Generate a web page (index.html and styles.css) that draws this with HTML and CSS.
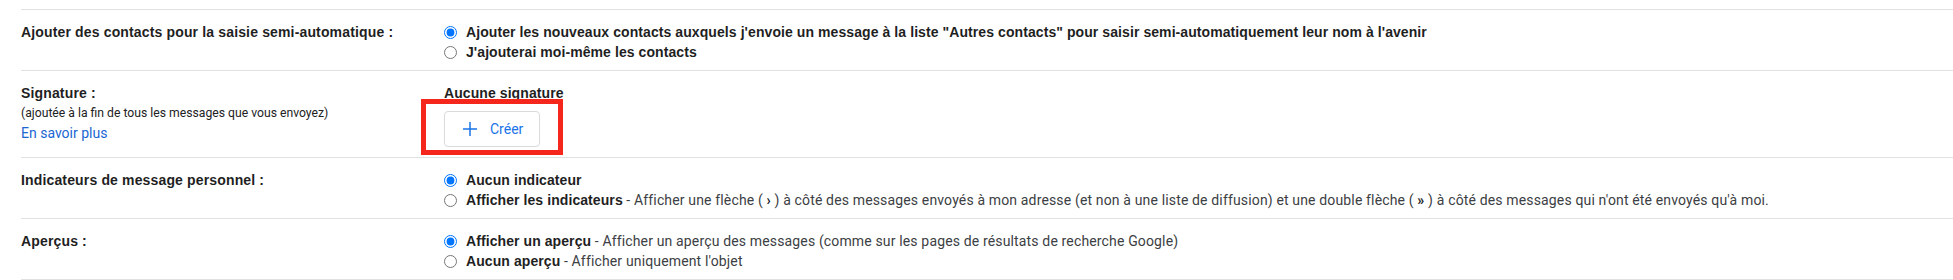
FILE: index.html
```html
<!DOCTYPE html>
<html lang="fr">
<head>
<meta charset="utf-8">
<title>Paramètres</title>
<link rel="stylesheet" href="styles.css">
</head>
<body>
<div class="settings">
  <div class="row">
    <div class="label"><span class="label-title">Ajouter des contacts pour la saisie semi-automatique :</span></div>
    <div class="value">
      <label class="opt"><input type="radio" name="ac" checked><span class="opt-title">Ajouter les nouveaux contacts auxquels j'envoie un message à la liste "Autres contacts" pour saisir semi-automatiquement leur nom à l'avenir</span></label>
      <label class="opt"><input type="radio" name="ac"><span class="opt-title">J'ajouterai moi-même les contacts</span></label>
    </div>
  </div>

  <div class="row">
    <div class="label">
      <span class="label-title">Signature :</span>
      <span class="label-note">(ajoutée à la fin de tous les messages que vous envoyez)</span>
      <a class="label-link" href="#">En savoir plus</a>
    </div>
    <div class="value">
      <span class="opt-title">Aucune signature</span>
      <div class="create-wrap">
        <button class="create-btn" type="button">
          <svg class="create-icon" width="24" height="24" viewBox="0 0 24 24" aria-hidden="true"><path d="M12 5v14M5 12h14" stroke="#1a73e8" stroke-width="1.5" fill="none"/></svg>
          <span>Créer</span>
        </button>
      </div>
    </div>
  </div>

  <div class="row">
    <div class="label"><span class="label-title">Indicateurs de message personnel :</span></div>
    <div class="value">
      <label class="opt"><input type="radio" name="ind" checked><span class="opt-title">Aucun indicateur</span></label>
      <label class="opt"><input type="radio" name="ind"><span class="opt-title">Afficher les indicateurs</span><span class="opt-desc">&nbsp;- Afficher une flèche ( <b>›</b> ) à côté des messages envoyés à mon adresse (et non à une liste de diffusion) et une double flèche ( <b>»</b> ) à côté des messages qui n'ont été envoyés qu'à moi.</span></label>
    </div>
  </div>

  <div class="row">
    <div class="label"><span class="label-title">Aperçus :</span></div>
    <div class="value">
      <label class="opt"><input type="radio" name="ap" checked><span class="opt-title">Afficher un aperçu</span><span class="opt-desc">&nbsp;- Afficher un aperçu des messages (comme sur les pages de résultats de recherche Google)</span></label>
      <label class="opt"><input type="radio" name="ap"><span class="opt-title">Aucun aperçu</span><span class="opt-desc">&nbsp;- Afficher uniquement l'objet</span></label>
    </div>
  </div>
</div>
</body>
</html>
```

FILE: styles.css
```css
html, body {
  margin: 0;
  background: #ffffff;
}

body {
  font-family: "Liberation Sans", Arial, sans-serif;
  font-size: 14px;
  line-height: 20px;
  color: #1f1f1f;
}

.settings {
  margin-left: 21px;
  padding-top: 9px;
}

.row {
  display: grid;
  grid-template-columns: 423px 1fr;
  border-top: 1px solid #e1e1e1;
  padding: 12px 0 8px;
}

.row:last-child {
  border-bottom: 1px solid #e1e1e1;
}

.label {
  display: flex;
  flex-direction: column;
}

.label-title {
  font-weight: bold;
  color: #1f1f1f;
  letter-spacing: 0.15px;
}

.label-note {
  font-family: Roboto, "Liberation Sans", sans-serif;
  font-size: 12.2px;
  color: #222222;
}

.label-link {
  font-family: Roboto, "Liberation Sans", sans-serif;
  font-size: 14px;
  color: #1a66d2;
  text-decoration: none;
}

.value {
  display: flex;
  flex-direction: column;
  align-items: flex-start;
}

.opt {
  display: flex;
  align-items: center;
  height: 20px;
  white-space: nowrap;
}

.opt input {
  margin: 0 9px 0 0;
  width: 13px;
  height: 13px;
  flex: none;
}

.opt-title {
  font-weight: bold;
  color: #1f1f1f;
  letter-spacing: 0.08px;
}

.opt-desc {
  font-family: Roboto, "Liberation Sans", sans-serif;
  font-size: 14px;
  letter-spacing: 0.15px;
  color: #3c4043;
}

.opt-desc b {
  font-weight: bold;
  color: #202124;
}

.create-wrap {
  position: relative;
  margin: 8px 0 2px;
}

.create-wrap::after {
  content: "";
  position: absolute;
  top: -12px;
  left: -23px;
  right: -23px;
  bottom: -8px;
  border: 5px solid #f5261b;
  pointer-events: none;
}

.create-btn {
  display: flex;
  align-items: center;
  height: 36px;
  margin: 0;
  padding: 0 16px 0 13px;
  background: #ffffff;
  border: 1px solid #d9dadc;
  border-radius: 4px;
  font-family: Roboto, "Liberation Sans", sans-serif;
  font-size: 14px;
  font-weight: 400;
  color: #1a73e8;
  cursor: pointer;
}

.create-icon {
  display: block;
  margin-right: 8px;
}
```
